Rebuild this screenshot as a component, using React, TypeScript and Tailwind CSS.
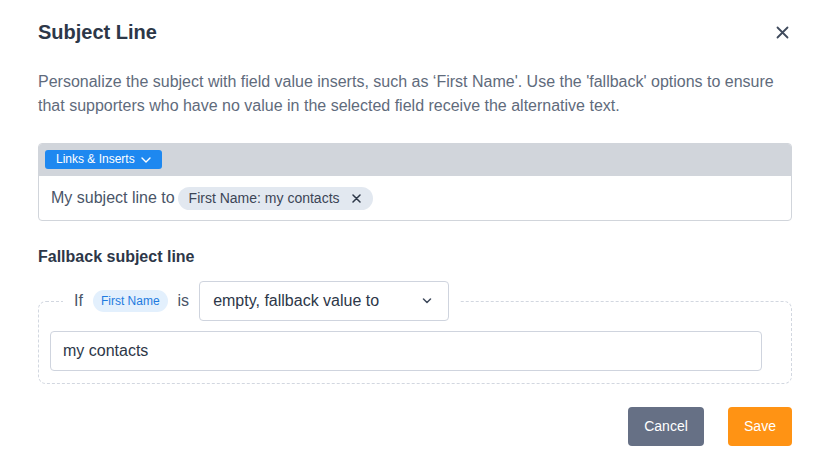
import React from "react";

export default function App() {
  return (
    <div
      className="w-[820px] h-[471px] bg-white pl-[38px] pr-[28px] pt-[20px] text-[#4a5568]"
      style={{ fontFamily: '"Liberation Sans", Arial, sans-serif' }}
    >
      <div className="flex items-center justify-between h-[24px]">
        <h1 className="text-[20px] leading-[24px] font-bold text-[#2d3748]">Subject Line</h1>
        <button className="w-[24px] h-[24px] flex items-center justify-center mr-[-2px]">
          <svg width="13" height="13" viewBox="0 0 13 13" fill="none" stroke="#3f4a5c" strokeWidth="1.8" strokeLinecap="round">
            <path d="M1.5 1.5 L11.5 11.5 M11.5 1.5 L1.5 11.5" />
          </svg>
        </button>
      </div>

      <p className="mt-[26px] text-[16px] leading-[24px] text-[#5f6b7c]">
        Personalize the subject with field value inserts, such as ‘First Name'. Use the 'fallback' options to ensure that supporters who have no value in the selected field receive the alternative text.
      </p>

      <div className="mt-[25px] border border-[#d1d5db] rounded-[4px] overflow-hidden">
        <div className="h-[32px] bg-[#d1d5db] pl-[6px] pt-[6px]">
          <button className="h-[19px] px-[11px] rounded-[3px] bg-[#1e88f0] text-white text-[12px] leading-[19px] flex items-center gap-[6px]">
            Links &amp; Inserts
            <svg width="10" height="6" viewBox="0 0 10 6" fill="none" stroke="white" strokeWidth="1.4" strokeLinecap="round" strokeLinejoin="round">
              <path d="M1 1 L5 5 L9 1" />
            </svg>
          </button>
        </div>
        <div className="h-[44px] flex items-center pl-[12px] gap-[3px]">
          <span className="text-[16px] text-[#4a5568]">My subject line to</span>
          <span className="h-[23px] rounded-full bg-[#e2e8f0] flex items-center pl-[11px] pr-[12px] gap-[12px] text-[14px] text-[#3c4556]">
            First Name: my contacts
            <svg width="9" height="9" viewBox="0 0 9 9" fill="none" stroke="#2d3748" strokeWidth="1.5" strokeLinecap="round">
              <path d="M1 1 L8 8 M8 1 L1 8" />
            </svg>
          </span>
        </div>
      </div>

      <h2 className="mt-[27px] text-[16px] leading-[18px] font-bold text-[#2d3748]">Fallback subject line</h2>

      <fieldset className="mt-[15px] border border-dashed border-[#d2d7e0] rounded-[8px] pl-[11px] pr-[29px] pt-[10px] pb-[12px]">
        <legend className="ml-[13px] px-[11px]">
          <div className="flex items-center h-[40px]">
            <span className="text-[16px] text-[#4a5568]">If</span>
            <span className="ml-[10px] h-[22px] px-[8px] rounded-full bg-[#e3f0fd] text-[#1e7be0] text-[12px] leading-[22px]">First Name</span>
            <span className="ml-[10px] text-[16px] text-[#4a5568]">is</span>
            <div className="ml-[10px] w-[250px] h-[40px] border border-[#cfd4de] rounded-[4px] flex items-center justify-between pl-[13px] pr-[16px] text-[16px] text-[#2d3748]">
              empty, fallback value to
              <svg width="10" height="6" viewBox="0 0 10 6" fill="none" stroke="#3f4a5c" strokeWidth="1.5" strokeLinecap="round" strokeLinejoin="round">
                <path d="M1.5 1 L5 4.5 L8.5 1" />
              </svg>
            </div>
          </div>
        </legend>
        <div className="w-[712px] h-[40px] border border-[#cfd4de] rounded-[4px] flex items-center pl-[12px] text-[16px] text-[#2d3748]">
          my contacts
        </div>
      </fieldset>

      <div className="mt-[23px] flex justify-end gap-[24px]">
        <button className="w-[76px] h-[39px] rounded-[4px] bg-[#667085] text-white text-[14px]">Cancel</button>
        <button className="w-[64px] h-[39px] rounded-[4px] bg-[#ff9314] text-white text-[14px]">Save</button>
      </div>
    </div>
  );
}
